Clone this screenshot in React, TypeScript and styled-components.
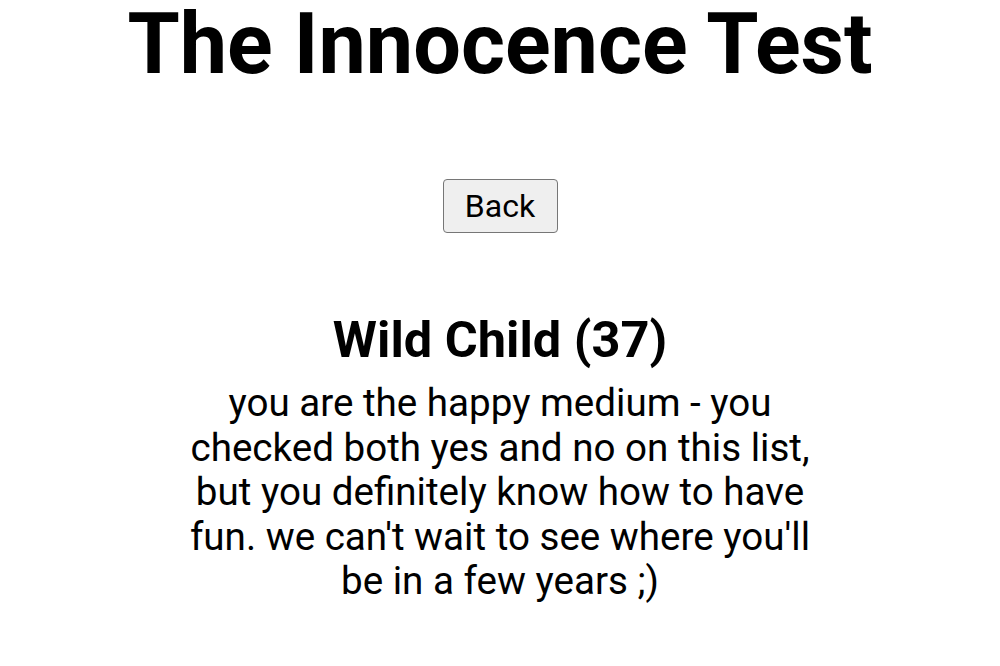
import React from "react";
import styled, { createGlobalStyle } from "styled-components";

const Global = createGlobalStyle`
  html, body { margin: 0; padding: 0; background: #fff; }
  body { font-family: Roboto, "Noto Sans", sans-serif; color: #000; }
`;

const Page = styled.main`
  display: flex;
  flex-direction: column;
  align-items: center;
  text-align: center;
`;

const Title = styled.h1`
  margin: 0;
  font-size: 84.5px;
  font-weight: 700;
  line-height: 90px;
`;

const BackButton = styled.button`
  margin-top: 89px;
  width: 115px;
  height: 54px;
  font-family: Roboto, sans-serif;
  font-size: 32px;
  color: #000;
  background: #efefef;
  border: 1.5px solid #767676;
  border-radius: 4px;
  padding: 0;
`;

const Result = styled.section`
  margin-top: 78px;
  width: 660px;
  display: flex;
  flex-direction: column;
  align-items: center;
`;

const ResultTitle = styled.h2`
  margin: 0;
  font-size: 50.5px;
  font-weight: 700;
  line-height: 58px;
`;

const ResultText = styled.p`
  margin: 12px 0 0;
  font-size: 38.6px;
  font-weight: 400;
  line-height: 44.5px;
`;

export default function App() {
  return (
    <>
      <Global />
      <Page>
        <Title>The Innocence Test</Title>
        <BackButton>Back</BackButton>
        <Result>
          <ResultTitle>Wild Child (37)</ResultTitle>
          <ResultText>
            you are the happy medium - you checked both yes and no on this list,
            but you definitely know how to have fun. we can't wait to see where
            you'll be in a few years ;)
          </ResultText>
        </Result>
      </Page>
    </>
  );
}
